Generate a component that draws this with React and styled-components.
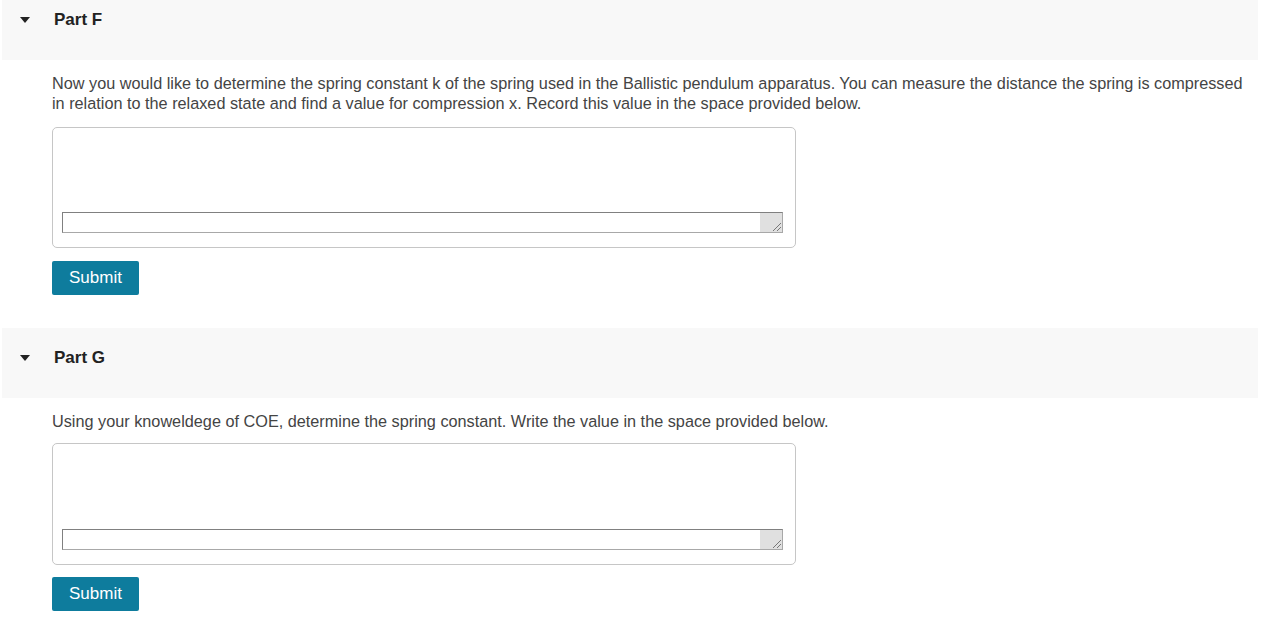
import React from 'react';
import styled, { createGlobalStyle } from 'styled-components';

const GlobalStyle = createGlobalStyle`
	html, body {
		margin: 0;
		padding: 0;
		background: #ffffff;
		font-family: "Liberation Sans", Arial, sans-serif;
		color: #333333;
	}
`;

const Page = styled.div`
	width: 1270px;
	height: 633px;
	overflow: hidden;
	padding: 0 12px 0 2px;
	box-sizing: border-box;
`;

const Part = styled.section`
	display: flex;
	flex-direction: column;
	margin-top: ${props => props.$first ? '-10px' : '33px'};
`;

const PartHeader = styled.div`
	display: flex;
	align-items: flex-start;
	height: 70px;
	background: #f8f8f8;
	padding: 20px 0 0 18px;
	box-sizing: border-box;
`;

const Caret = styled.span`
	width: 0;
	height: 0;
	margin-top: 7px;
	border-style: solid;
	border-width: 6px 5.5px 0 5.5px;
	border-color: #222222 transparent transparent transparent;
	margin-right: 24px;
`;

const PartTitle = styled.h2`
	margin: 0;
	font-size: 17px;
	line-height: 20px;
	font-weight: bold;
	color: #222222;
`;

const Body = styled.div`
	display: flex;
	flex-direction: column;
	align-items: flex-start;
	padding: 13px 0 0 50px;
`;

const Prompt = styled.p`
	margin: 0;
	font-size: 16.25px;
	line-height: 20px;
	color: #444444;
	white-space: nowrap;
`;

const AnswerBox = styled.div`
	margin-top: ${props => props.$gap || '14px'};
	width: 744px;
	height: ${props => props.$height || '121px'};
	border: 1px solid #c6c6c6;
	border-radius: 5px;
	box-sizing: border-box;
	display: flex;
	flex-direction: column;
	justify-content: flex-end;
	padding: 0 12px 14px 9px;
`;

const AnswerField = styled.div`
	display: flex;
	height: 21px;
	border: 1px solid #808080;
	border-right-color: #a8a8a8;
	border-bottom-color: #a8a8a8;
	box-sizing: border-box;
	background: #ffffff;
`;

const FieldInput = styled.div`
	flex: 1;
`;

const Grip = styled.div`
	width: 22px;
	background: #e0e0e0;
	display: flex;
	align-items: flex-end;
	justify-content: flex-end;
`;

const SubmitButton = styled.button`
	margin-top: ${props => props.$gap || '14px'};
	width: 87px;
	height: 34px;
	background: #0e7c9d;
	color: #ffffff;
	border: none;
	border-radius: 2px;
	font-family: "Liberation Sans", Arial, sans-serif;
	font-size: 17px;
	padding: 0;
`;

const ResizeGrip = () => (
	<Grip>
		<svg width="12" height="12" viewBox="0 0 12 12">
			<path d="M11 3 L3 11 M11 7 L7 11" stroke="#777" strokeWidth="1" fill="none" />
		</svg>
	</Grip>
);

const QuestionPart = ({ title, prompt, first, boxGap, boxHeight, buttonGap }) => (
	<Part $first={first}>
		<PartHeader>
			<Caret />
			<PartTitle>{title}</PartTitle>
		</PartHeader>
		<Body>
			<Prompt>{prompt}</Prompt>
			<AnswerBox $gap={boxGap} $height={boxHeight}>
				<AnswerField>
					<FieldInput />
					<ResizeGrip />
				</AnswerField>
			</AnswerBox>
			<SubmitButton $gap={buttonGap}>Submit</SubmitButton>
		</Body>
	</Part>
);

const App = () => {
	return (
		<>
			<GlobalStyle />
			<Page>
				<QuestionPart
					first
					title="Part F"
					prompt={<>Now you would like to determine the spring constant k of the spring used in the Ballistic pendulum apparatus. You can measure the distance the spring is compressed<br />in relation to the relaxed state and find a value for compression x. Record this value in the space provided below.</>}
					boxGap="14px"
					buttonGap="13px"
				/>
				<QuestionPart
					title="Part G"
					prompt="Using your knoweldege of COE, determine the spring constant. Write the value in the space provided below."
					boxGap="12px"
					boxHeight="122px"
					buttonGap="12px"
				/>
			</Page>
		</>
	);
};

export default App;
